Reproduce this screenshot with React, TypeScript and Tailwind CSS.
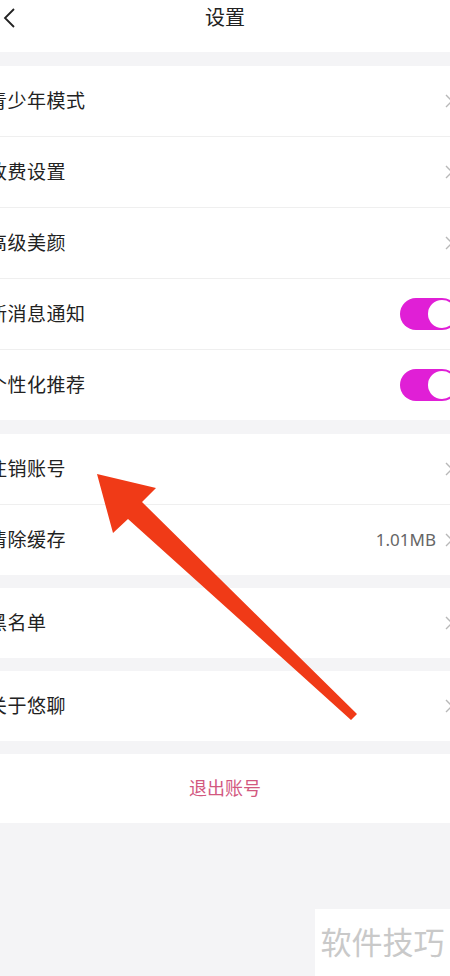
import React from 'react';

const FONT = { fontFamily: '"Noto Sans", "Noto Sans CJK SC", sans-serif' };

const Chevron = () => (
    <svg width="10" height="16" viewBox="0 0 10 16" className="mr-[-4px] shrink-0">
        <path d="M2 2 L8 8 L2 14" fill="none" stroke="#b8b8b8" strokeWidth="1.4" />
    </svg>
);

const Toggle = () => (
    <div className="w-[58px] h-[32px] rounded-full bg-[#e01fd6] flex items-center justify-end pr-[2px] mr-[-8px] shrink-0">
        <div className="w-[28px] h-[28px] rounded-full bg-white" />
    </div>
);

type Row = { label: string; right: 'chevron' | 'toggle'; value?: string };

const Section: React.FC<{ rows: Row[] }> = ({ rows }) => (
    <div className="bg-white">
        {rows.map((r, i) => (
            <div
                key={r.label}
                className={`flex items-center justify-between ${i < rows.length - 1 ? 'h-[71px] border-b border-[#efefef]' : 'h-[70px]'}`}
            >
                <span className="ml-[-12px] text-[19px] text-[#222] tracking-[0.5px] whitespace-nowrap">{r.label}</span>
                <div className="flex items-center gap-[8px]">
                    {r.value && <span className="text-[17px] text-[#666]">{r.value}</span>}
                    {r.right === 'toggle' ? <Toggle /> : <Chevron />}
                </div>
            </div>
        ))}
    </div>
);

export default function App() {
    return (
        <div className="relative w-[450px] h-[976px] overflow-hidden bg-[#f4f4f6]" style={FONT}>
            <div className="h-[52px] bg-white flex items-center justify-center relative">
                <svg width="14" height="22" viewBox="0 0 14 22" className="absolute left-[2px] top-[7px]">
                    <path d="M12 2 L3 11 L12 20" fill="none" stroke="#222" strokeWidth="1.8" />
                </svg>
                <span className="text-[20px] text-[#222] mt-[-16px]">设置</span>
            </div>

            <div className="h-[14px]" />
            <Section
                rows={[
                    { label: '青少年模式', right: 'chevron' },
                    { label: '收费设置', right: 'chevron' },
                    { label: '高级美颜', right: 'chevron' },
                    { label: '新消息通知', right: 'toggle' },
                    { label: '个性化推荐', right: 'toggle' },
                ]}
            />
            <div className="h-[14px]" />
            <Section
                rows={[
                    { label: '注销账号', right: 'chevron' },
                    { label: '清除缓存', right: 'chevron', value: '1.01MB' },
                ]}
            />
            <div className="h-[13px]" />
            <Section rows={[{ label: '黑名单', right: 'chevron' }]} />
            <div className="h-[13px]" />
            <Section rows={[{ label: '关于悠聊', right: 'chevron' }]} />
            <div className="h-[13px]" />
            <div className="h-[69px] bg-white flex items-center justify-center">
                <span className="text-[18px] text-[#d2587f]">退出账号</span>
            </div>

            <div className="absolute right-0 bottom-0 w-[135px] h-[67px] bg-white flex items-center justify-center">
                <span className="text-[31px] text-[#c9c9c9] whitespace-nowrap leading-none">软件技巧</span>
            </div>

            <svg className="absolute inset-0 pointer-events-none" width="450" height="976" viewBox="0 0 450 976">
                <polygon
                    points="97,474 156,488 142,502 357,714 351,720 128,519 113,533"
                    fill="#f03a17"
                />
            </svg>
        </div>
    );
}
